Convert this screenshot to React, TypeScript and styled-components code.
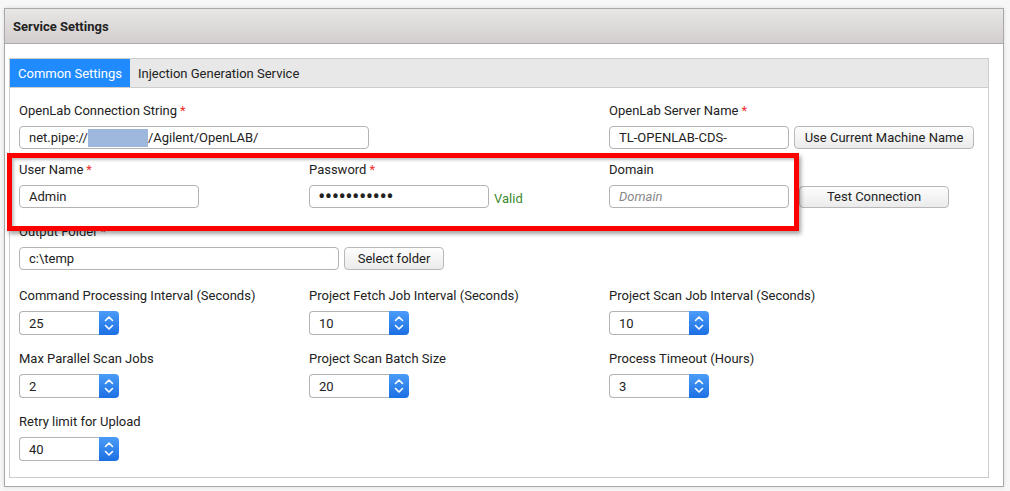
import React from 'react';
import styled, { createGlobalStyle, css } from 'styled-components';

const GlobalStyle = createGlobalStyle`
  html, body {
    margin: 0;
    padding: 0;
    background: #f7f7f7;
    font-family: Roboto, "Liberation Sans", Arial, sans-serif;
    font-size: 13px;
    color: #222;
  }
  * {
    box-sizing: border-box;
  }
`;

const Page = styled.div`
  padding: 8px 6px 4px 4px;
`;

const Panel = styled.div`
  position: relative;
  width: 1000px;
  height: 479px;
  background: #fff;
  border: 1px solid #a9a9a9;
  box-shadow: 0 0 4px rgba(0, 0, 0, 0.12);
`;

const PanelHeader = styled.div`
  display: flex;
  align-items: center;
  height: 35px;
  padding-left: 8px;
  background: linear-gradient(#e9e7e6, #d1cecd);
  border-bottom: 1px solid #a9a9a9;
  font-weight: bold;
  font-size: 13px;
  color: #222;
`;

const PanelBody = styled.div`
  padding: 14px 14px 7px 4px;
`;

const Tabs = styled.div`
  height: 420px;
  border: 1px solid #cdcdcd;
`;

const TabBar = styled.div`
  display: flex;
  height: 29px;
  background: #e8e8e8;
  border-bottom: 1px solid #cdcdcd;
`;

const Tab = styled.div<{ $active?: boolean }>`
  display: flex;
  align-items: center;
  padding: 0 8px;
  font-size: 13px;
  color: #222;
  ${(p) =>
    p.$active &&
    css`
      background: #1f8bff;
      color: #fff;
    `};
`;

const TabContent = styled.div`
  padding: 15px 9px 0 9px;
`;

const Row = styled.div<{ $top?: number }>`
  display: grid;
  grid-template-columns: 290px 300px 1fr;
  margin-top: ${(p) => p.$top || 0}px;
`;

const Field = styled.div<{ $span?: number }>`
  display: flex;
  flex-direction: column;
  grid-column: span ${(p) => p.$span || 1};
`;

const Label = styled.div`
  height: 16px;
  line-height: 16px;
  margin-bottom: 7px;
  font-size: 13px;
  color: #222;
  white-space: nowrap;
`;

const Required = styled.span`
  color: #f0302e;
  margin-left: 3px;
`;

const Controls = styled.div<{ $gap?: number }>`
  display: flex;
  align-items: center;
  gap: ${(p) => (p.$gap === undefined ? 5 : p.$gap)}px;
`;

const boxStyle = css`
  height: 23px;
  border: 1px solid #b3b3b3;
  border-radius: 4px;
  background: #fff;
  padding: 0 9px;
  font-family: Roboto, "Liberation Sans", Arial, sans-serif;
  font-size: 13px;
  color: #222;
  outline: none;
`;

const TextInput = styled.input<{ $width: number }>`
  ${boxStyle};
  width: ${(p) => p.$width}px;
  &::placeholder {
    color: #888;
    font-style: italic;
  }
`;

const PasswordInput = styled(TextInput)`
  font-size: 22px;
  letter-spacing: -0.6px;
  padding-left: 8px;
`;

const TextBox = styled.div<{ $width: number }>`
  ${boxStyle};
  width: ${(p) => p.$width}px;
  display: flex;
  align-items: center;
  white-space: nowrap;
`;

const Redacted = styled.span`
  display: inline-block;
  width: 60px;
  height: 18px;
  background: #9db8dc;
`;

const Button = styled.button<{ $width: number; $height?: number }>`
  width: ${(p) => p.$width}px;
  height: ${(p) => p.$height || 23}px;
  border: 1px solid #b8b8b8;
  border-radius: 4px;
  background: linear-gradient(#fdfdfd, #ebebeb);
  font-family: Roboto, "Liberation Sans", Arial, sans-serif;
  font-size: 13px;
  color: #222;
  padding: 0;
`;

const Valid = styled.span`
  color: #3a8a2c;
  font-size: 13px;
  margin-top: 3px;
`;

const Spinner = styled.div`
  display: flex;
  width: 100px;
  height: 24px;
`;

const SpinValue = styled.div`
  flex: 1;
  display: flex;
  align-items: center;
  padding-left: 9px;
  border: 1px solid #b3b3b3;
  border-right: none;
  border-radius: 4px 0 0 4px;
  background: #fff;
  font-size: 13px;
  color: #222;
`;

const SpinButton = styled.div`
  width: 20px;
  border-radius: 0 4px 4px 0;
  background: linear-gradient(#4b9cf8, #1c6fe3);
  display: flex;
  align-items: center;
  justify-content: center;
`;

const Highlight = styled.div`
  position: absolute;
  left: 2px;
  top: 144px;
  width: 792px;
  height: 78px;
  border: 5px solid #ff0000;
  box-shadow: 2px 3px 4px rgba(0, 0, 0, 0.35), inset 2px 2px 3px rgba(0, 0, 0, 0.25);
  pointer-events: none;
`;

function NumberSpinner({ value }: { value: number }) {
  return (
    <Spinner>
      <SpinValue>{value}</SpinValue>
      <SpinButton>
        <svg width="12" height="18" viewBox="0 0 12 18">
          <path d="M2.5 6.5 L6 3 L9.5 6.5" fill="none" stroke="#fff" strokeWidth="1.6" strokeLinecap="round" strokeLinejoin="round" />
          <path d="M2.5 11.5 L6 15 L9.5 11.5" fill="none" stroke="#fff" strokeWidth="1.6" strokeLinecap="round" strokeLinejoin="round" />
        </svg>
      </SpinButton>
    </Spinner>
  );
}

interface SpinField {
  label: string;
  value: number;
}

const spinRows: { top: number; fields: SpinField[] }[] = [
  {
    top: 18,
    fields: [
      { label: 'Command Processing Interval (Seconds)', value: 25 },
      { label: 'Project Fetch Job Interval (Seconds)', value: 10 },
      { label: 'Project Scan Job Interval (Seconds)', value: 10 },
    ],
  },
  {
    top: 16,
    fields: [
      { label: 'Max Parallel Scan Jobs', value: 2 },
      { label: 'Project Scan Batch Size', value: 20 },
      { label: 'Process Timeout (Hours)', value: 3 },
    ],
  },
  {
    top: 16,
    fields: [{ label: 'Retry limit for Upload', value: 40 }],
  },
];

export default function App() {
  return (
    <Page>
      <GlobalStyle />
      <Panel>
        <PanelHeader>Service Settings</PanelHeader>
        <PanelBody>
          <Tabs>
            <TabBar>
              <Tab $active>Common Settings</Tab>
              <Tab>Injection Generation Service</Tab>
            </TabBar>
            <TabContent>
              <Row>
                <Field $span={2}>
                  <Label>
                    OpenLab Connection String<Required>*</Required>
                  </Label>
                  <TextBox $width={350}>
                    net.pipe://
                    <Redacted />
                    /Agilent/OpenLAB/
                  </TextBox>
                </Field>
                <Field>
                  <Label>
                    OpenLab Server Name<Required>*</Required>
                  </Label>
                  <Controls>
                    <TextInput $width={180} readOnly value="TL-OPENLAB-CDS-" />
                    <Button $width={180}>Use Current Machine Name</Button>
                  </Controls>
                </Field>
              </Row>

              <Row $top={13}>
                <Field>
                  <Label>
                    User Name<Required>*</Required>
                  </Label>
                  <TextInput $width={180} readOnly value="Admin" />
                </Field>
                <Field>
                  <Label>
                    Password<Required>*</Required>
                  </Label>
                  <Controls>
                    <PasswordInput type="password" $width={180} readOnly value="adminadmin1" />
                    <Valid>Valid</Valid>
                  </Controls>
                </Field>
                <Field>
                  <Label>Domain</Label>
                  <Controls $gap={10}>
                    <TextInput $width={180} readOnly placeholder="Domain" />
                    <Button $width={150} $height={22}>
                      Test Connection
                    </Button>
                  </Controls>
                </Field>
              </Row>

              <Row $top={16}>
                <Field $span={2}>
                  <Label>
                    Output Folder<Required>*</Required>
                  </Label>
                  <Controls>
                    <TextInput $width={320} readOnly value="c:\temp" />
                    <Button $width={100}>Select folder</Button>
                  </Controls>
                </Field>
              </Row>

              {spinRows.map((row, i) => (
                <Row key={i} $top={row.top}>
                  {row.fields.map((f) => (
                    <Field key={f.label}>
                      <Label>{f.label}</Label>
                      <NumberSpinner value={f.value} />
                    </Field>
                  ))}
                </Row>
              ))}
            </TabContent>
          </Tabs>
        </PanelBody>
        <Highlight />
      </Panel>
    </Page>
  );
}
